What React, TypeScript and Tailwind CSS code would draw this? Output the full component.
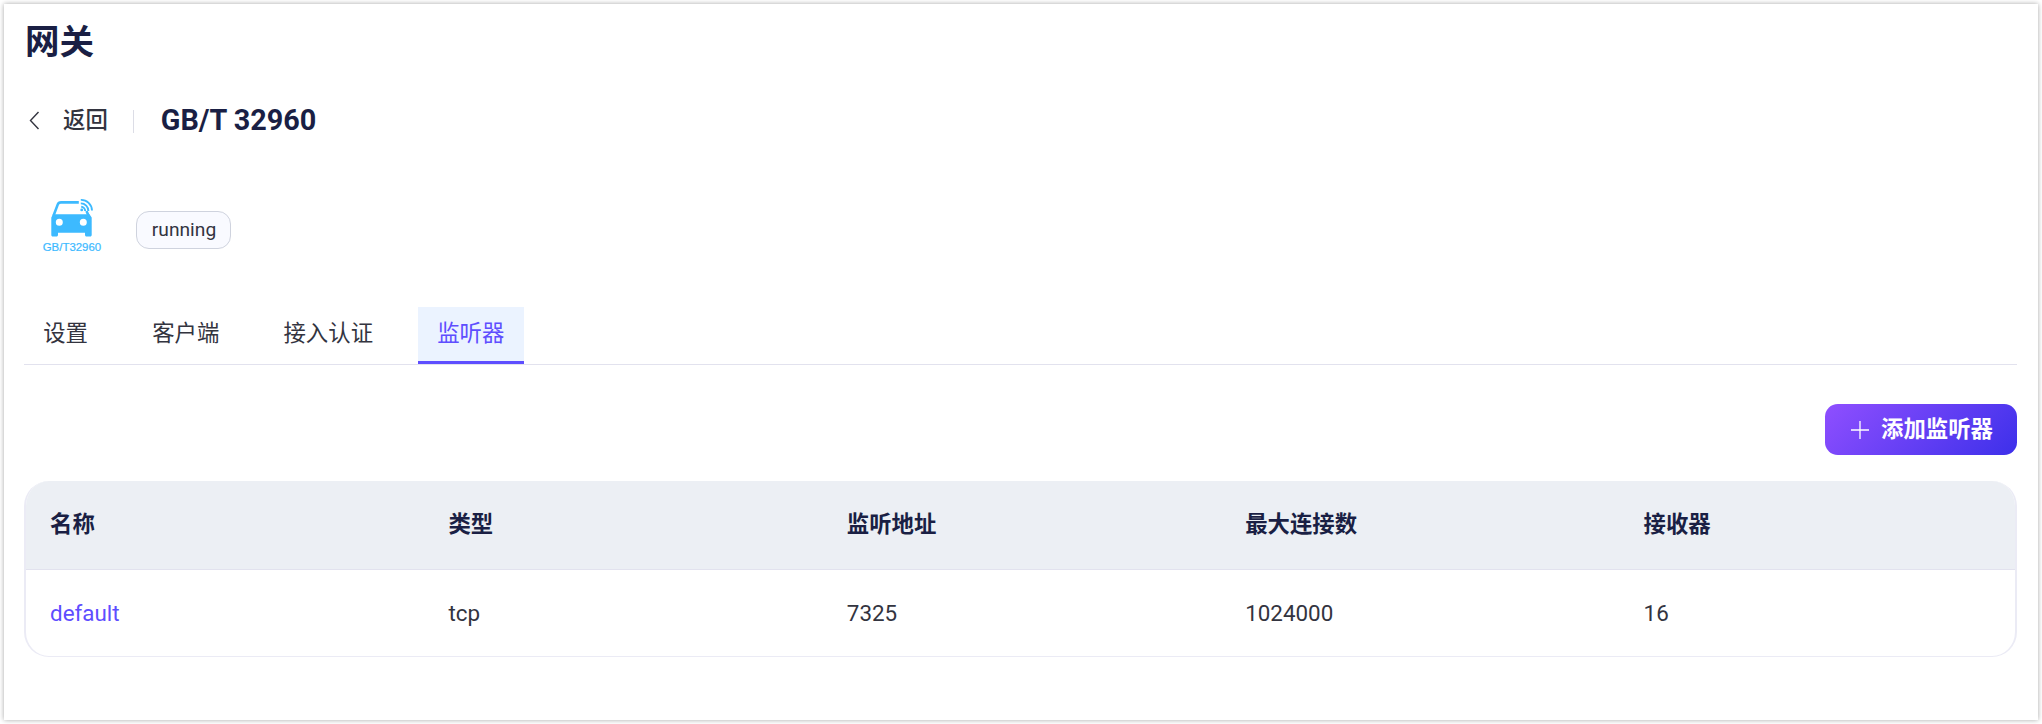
import { useState } from 'react'
import clsx from 'clsx'

// ── 网关详情 > 监听器 ──

const TABS = [
  { key: 'setting', label: '设置' },
  { key: 'client', label: '客户端' },
  { key: 'auth', label: '接入认证' },
  { key: 'listener', label: '监听器' },
]

const COLUMNS = ['名称', '类型', '监听地址', '最大连接数', '接收器']

const LISTENERS = [
  { name: 'default', type: 'tcp', bind: '7325', maxConn: '1024000', acceptors: '16' },
]

function CarLogo() {
  return (
    <svg viewBox="0 0 64 64" className="h-16 w-16" fill="none">
      {/* 车顶与车窗 */}
      <path d="M38.800 12.400H21c-1.700 0-2.700.6-3.300 2.200L13.400 26M46.500 21l2.200 5" stroke="#3dbaff" strokeWidth="2.600" />
      {/* 车身 */}
      <path fillRule="evenodd" fill="#3dbaff"
        d="M13 24.300h36.500l2.200 3.200v17.400c0 .9-.6 1.500-1.500 1.500h-3.600c-.9 0-1.600-.6-1.600-1.500v-2.200H18v2.200c0 .9-.7 1.500-1.600 1.500h-3.600c-.9 0-1.500-.6-1.500-1.500V27.500zM19.300 28.800a3.500 3.500 0 1 0 0 7 3.500 3.500 0 0 0 0-7zM43.300 28.800a3.500 3.500 0 1 0 0 7 3.500 3.500 0 0 0 0-7z" />
      {/* 信号 */}
      <circle cx="41.700" cy="19.900" r="1.400" fill="#3dbaff" />
      <path d="M41.200 16.800a4.200 4.200 0 0 1 4 4.200M40.800 13.400a7.500 7.500 0 0 1 7.600 7.600M40.800 9.900a10.800 10.800 0 0 1 11.200 10.600" stroke="#3dbaff" strokeWidth="1.900" />
      <text x="2.700" y="61" textLength="58.500" lengthAdjust="spacingAndGlyphs" fontSize="10.800" fill="#3dbaff" stroke="#3dbaff" strokeWidth="0.200" fontFamily="Liberation Sans, sans-serif">GB/T32960</text>
    </svg>
  )
}

export default function App() {
  const [tab, setTab] = useState('listener')

  return (
    <div className="h-[724px] bg-white p-1 font-['Roboto','Noto_Sans_CJK_SC',sans-serif] text-[22.4px] text-[#33343f]">
      <div className="h-[716px] bg-white pt-[13px] pr-[21px] pl-5 shadow-[0_0_5px_rgba(0,0,0,0.35)]">
        <h1 className="flex h-[52px] items-center pl-px text-[34.5px] font-bold text-[#1a1f44]">网关</h1>

        {/* 返回栏 */}
        <div className="mt-[26px] flex h-[52px] items-center">
          <button className="flex items-center">
            <svg viewBox="0 0 22 22" className="h-[22px] w-[22px]" fill="none" stroke="#33343f" strokeWidth="1.400">
              <path d="M14.500 2 6.500 10.500l8 8.500" />
            </svg>
            <span className="ml-[17px] font-medium">返回</span>
          </button>
          <div className="ml-[25px] h-[23px] w-px bg-[#dcdde6]" />
          <h2 className="ml-[27px] text-[28.8px] font-bold text-[#1a1f44]">GB/T 32960</h2>
        </div>

        {/* 协议图标 + 状态 */}
        <div className="mt-[43px] flex h-20 items-start pl-4">
          <CarLogo />
          <span className="mt-[21px] ml-8 flex h-[38px] w-[95px] items-center justify-center rounded-[13px] border border-[#cfd3de] bg-[#f9faff] pt-px pl-px text-[19.2px]">running</span>
        </div>

        <nav className="mt-[37px] flex h-[58px] gap-[25.8px] border-b border-[#e2e2ee]">
          {TABS.map(t => (
            <button key={t.key} onClick={() => setTab(t.key)}
              className={clsx('h-[57px] border-b-[3px] px-[19.2px]',
                tab === t.key ? 'border-[#5e4eff] bg-[#ebf3ff] text-[#5e4eff]' : 'border-transparent')}>
              {t.label}
            </button>
          ))}
        </nav>

        <div className="mt-[39px] flex justify-end">
          <button className="flex h-[51px] w-48 items-center rounded-[12.8px] bg-[linear-gradient(135deg,#8f4fff,#3d30ea)] pl-[26px] font-bold text-white">
            <svg viewBox="0 0 18 18" className="h-[18px] w-[18px]" stroke="currentColor" strokeWidth="1.300">
              <path d="M9 0v18M0 9h18" />
            </svg>
            <span className="ml-3">添加监听器</span>
          </button>
        </div>

        {/* 监听器列表 */}
        <div className="mt-[26px] overflow-hidden rounded-[25px] border-x-2 border-b border-[#ebebf5] bg-white">
          <div className="-mr-px -ml-0.5 grid h-[89px] grid-cols-5 items-center border-b border-[#e2e2ee] bg-[#eceff4] font-bold text-[#1a1f44]">
            {COLUMNS.map(c => <div key={c} className="pl-[26px]">{c}</div>)}
          </div>
          {LISTENERS.map(l => (
            <div key={l.name} className="-mr-px -ml-0.5 grid h-[86px] grid-cols-5 items-center pt-px">
              <a className="pl-[26px] text-[#5e4eff]">{l.name}</a>
              <div className="pl-[26px]">{l.type}</div>
              <div className="pl-[26px]">{l.bind}</div>
              <div className="pl-[26px]">{l.maxConn}</div>
              <div className="pl-[26px]">{l.acceptors}</div>
            </div>
          ))}
        </div>
      </div>
    </div>
  )
}
